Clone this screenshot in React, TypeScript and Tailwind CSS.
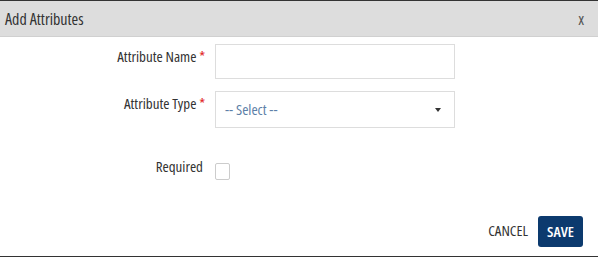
import React from "react";

export default function App() {
  const font = { fontFamily: '"Open Sans", sans-serif', fontStretch: "84%", fontWeight: 375 };
  return (
    <div
      className="w-[598px] h-[257px] bg-white border-t border-b border-[#333333] flex flex-col text-[#333333]"
      style={font}
    >
      <div className="h-[36px] bg-[#dddddd] flex items-center justify-between pl-[5px] pr-[14px] border-b border-[#d0d0d0]">
        <span className="text-[16px]">Add Attributes</span>
        <span className="text-[16px] text-[#555555]">x</span>
      </div>
      <div className="flex flex-col pt-[7px]">
        <div className="flex items-start">
          <div className="w-[205px] text-right text-[15px] leading-[20px] pt-[2px]">
            Attribute Name <span className="text-[#e02020]">*</span>
          </div>
          <input className="ml-[10px] w-[240px] h-[35px] border border-[#dddddd] outline-none" />
        </div>
        <div className="flex items-start mt-[12px]">
          <div className="w-[205px] text-right text-[15px] leading-[20px] pt-[2px]">
            Attribute Type <span className="text-[#e02020]">*</span>
          </div>
          <div className="ml-[10px] w-[240px] h-[37px] border border-[#dddddd] flex items-center justify-between pl-[9px] pr-[13px]">
            <span className="text-[15px] text-[#5d7fa8]">-- Select --</span>
            <span className="w-0 h-0 border-l-[3px] border-r-[3px] border-t-[4px] border-l-transparent border-r-transparent border-t-[#333333]"></span>
          </div>
        </div>
        <div className="flex items-start mt-[28px]">
          <div className="w-[203px] text-right text-[15px] leading-[20px]">Required</div>
          <div className="ml-[12px] mt-[7px] w-[15px] h-[17px] border border-[#cccccc] rounded-[2px]"></div>
        </div>
      </div>
      <div className="flex-1 flex items-end justify-end pr-[15px] pb-[9px]">
        <span className="text-[15px] mr-[10px] mb-[6px]">CANCEL</span>
        <button className="w-[45px] h-[31px] bg-[#0c3a6e] text-white text-[15px] rounded-[3px]" style={{ fontWeight: 550 }}>SAVE</button>
      </div>
    </div>
  );
}
